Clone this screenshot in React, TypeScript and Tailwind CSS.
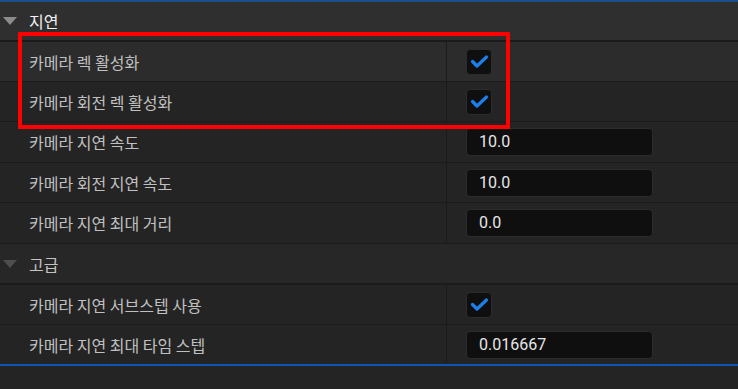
import React from 'react';

const label = { fontFamily: '"Noto Sans CJK KR", "Noto Sans", sans-serif' };
const num = { fontFamily: 'Roboto, "Liberation Sans", sans-serif' };

function Check() {
  return (
    <div className="w-[26px] h-[26px] rounded-[4px] bg-[#0f0f0f] border border-[#2c2c2c] flex items-center justify-center">
      <svg width="26" height="26" viewBox="0 0 26 26" className="-m-px">
        <path d="M6.5 12.5 L11 17 L20.5 8" fill="none" stroke="#1d80ea" strokeWidth="3.2" strokeLinecap="round" strokeLinejoin="round" />
      </svg>
    </div>
  );
}

function Field({ value }: { value: string }) {
  return (
    <div className="w-[187px] h-[28px] rounded-[4px] bg-[#0f0f0f] border border-[#2c2c2c] flex items-center pl-[12px]">
      <span className="text-[16px] text-[#e6e6e6] leading-none" style={num}>{value}</span>
    </div>
  );
}

function Header({ title, active, h, border }: { title: string; active?: boolean; h: string; border?: string }) {
  return (
    <div className={`flex items-center ${h} ${border ?? ''} ${active ? 'bg-[#2f2f2f]' : 'bg-[#272727]'}`}>
      <svg width="14" height="8" viewBox="0 0 14 8" className="ml-[3px] mr-[12px]">
        <path d="M0 0 H14 L7 8 Z" fill={active ? '#8c8c8c' : '#4e4e4e'} />
      </svg>
      <span className={`text-[16px] ${active ? 'text-[#f2f2f2]' : 'text-[#c4c4c4]'}`} style={label}>{title}</span>
    </div>
  );
}

function Row({ name, children, h, hover, border = 'border-t border-[#1b1b1b]' }: { name: string; children: React.ReactNode; h: string; hover?: boolean; border?: string }) {
  return (
    <div className={`flex ${h} ${border} ${hover ? 'bg-[#2c2c2c]' : 'bg-[#242424]'}`}>
      <div className="w-[447px] flex items-center pl-[29px] border-r border-[#1b1b1b]">
        <span className="text-[16px] text-[#c0c0c0]" style={label}>{name}</span>
      </div>
      <div className="flex-1 flex items-center pl-[19px]">{children}</div>
    </div>
  );
}

export default function App() {
  return (
    <div className="relative w-[738px] h-[389px] bg-[#242424] overflow-hidden">
      <div className="h-[2px] bg-[#1d4f8c]" />
      <Header title="지연" active h="h-[38px]" />
      <Row name="카메라 렉 활성화" h="h-[41px]" hover border="border-t-2 border-[#1b1b1b]"><Check /></Row>
      <Row name="카메라 회전 렉 활성화" h="h-[40px]"><Check /></Row>
      <Row name="카메라 지연 속도" h="h-[41px]"><Field value="10.0" /></Row>
      <Row name="카메라 회전 지연 속도" h="h-[40px]"><Field value="10.0" /></Row>
      <Row name="카메라 지연 최대 거리" h="h-[41px]"><Field value="0.0" /></Row>
      <Header title="고급" h="h-[40px]" border="border-t border-[#1b1b1b]" />
      <Row name="카메라 지연 서브스텝 사용" h="h-[41px]" border="border-t-2 border-[#1b1b1b]"><Check /></Row>
      <Row name="카메라 지연 최대 타임 스텝" h="h-[40px]"><Field value="0.016667" /></Row>
      <div className="h-[2px] bg-[#0f56b4]" />
      <div className="absolute left-[18px] top-[32px] w-[492px] h-[97px] border-4 border-[#ff0000]" />
    </div>
  );
}
